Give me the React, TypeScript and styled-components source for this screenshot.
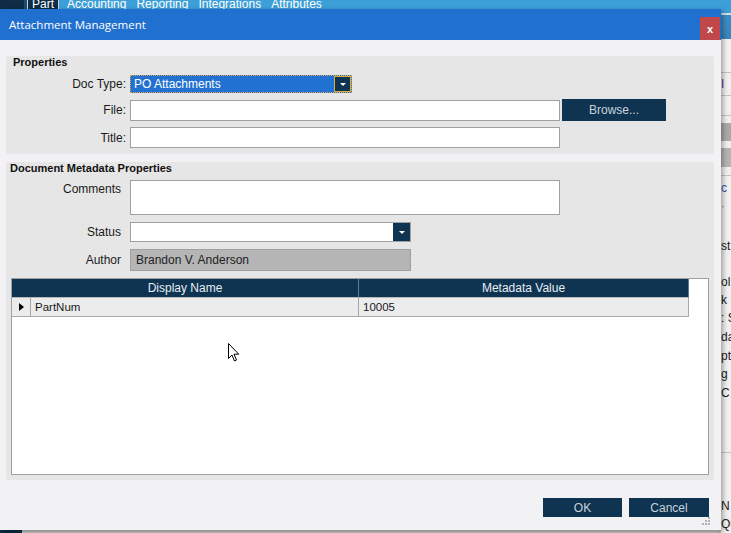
import React from 'react';
import styled, {createGlobalStyle} from 'styled-components';

const Navy = '#0e3452';
const Sans = '"Liberation Sans", Arial, sans-serif';

const GlobalStyle = createGlobalStyle`
    html, body {
        margin: 0;
        padding: 0;
    }
    body {
        font-family: ${Sans};
        background: #0e2c45;
    }
`;

const Screen = styled.div`
    position: relative;
    width: 731px;
    height: 533px;
    overflow: hidden;
    background: #ededed;
    display: flex;
    flex-direction: column;
`;

/* ---------- application behind the dialog ---------- */

const MenuBar = styled.div`
    height: 13px;
    display: flex;
    align-items: flex-start;
    background: #3c9fd8;
    font-size: 12px;
    color: #ffffff;
`;

const MenuBrand = styled.div`
    width: 24px;
    height: 100%;
    background: #0e2c45;
    border-right: 3px solid #1d4a6e;
`;

const MenuTab = styled.div<{active?: boolean}>`
    padding: 0 ${({active}) => (active ? '4px' : '5px')};
    margin-right: ${({active}) => (active ? '3px' : '0')};
    line-height: 9px;
    height: 13px;
    box-sizing: border-box;
    background: ${({active}) => (active ? '#0e2c45' : 'transparent')};
    border: ${({active}) => (active ? '1px solid #c8d4de' : 'none')};
    border-top: none;
`;

const SubBar = styled.div`
    height: 26px;
    background: linear-gradient(#3a8fc9, #3b84b8);
    border-top: 2px solid #d8dde2;
`;

const AppBody = styled.div`
    flex: 1;
    display: flex;
`;

const LeftRail = styled.div`
    width: 22px;
    background: #0e2c45;
`;

const MainArea = styled.div`
    flex: 1;
    background: #c8c8c8;
`;

const RightPeek = styled.div`
    width: 10px;
    display: flex;
    flex-direction: column;
    background: #f0f0f0;
    border-left: 3px solid #bdbdbd;
    overflow: hidden;
    font-size: 12px;
    color: #1a1a1a;
    white-space: nowrap;
`;

const PeekRow = styled.div<{h: number; bg?: string; line?: boolean; color?: string}>`
    height: ${({h}) => h}px;
    line-height: ${({h}) => h}px;
    box-sizing: border-box;
    flex-shrink: 0;
    background: ${({bg}) => bg || 'transparent'};
    border-bottom: ${({line}) => (line ? '1px solid #c4c4c4' : 'none')};
    color: ${({color}) => color || 'inherit'};
`;

/* ---------- dialog ---------- */

const Dialog = styled.div`
    position: absolute;
    top: 9px;
    left: 0;
    width: 721px;
    height: 521px;
    display: flex;
    flex-direction: column;
    box-shadow: 2px 2px 5px rgba(0, 0, 0, 0.35);
`;

const TitleBar = styled.div`
    height: 31px;
    flex-shrink: 0;
    display: flex;
    align-items: center;
    padding-left: 9px;
    background: #2070d0;
    color: #ffffff;
    font-family: "Open Sans", "Noto Sans", sans-serif;
    font-size: 11.5px;
`;

const CloseButton = styled.div`
    margin-left: auto;
    margin-right: 1px;
    align-self: flex-end;
    width: 20px;
    height: 23px;
    display: flex;
    align-items: center;
    justify-content: center;
    background: #c0474a;
    color: #ffffff;
    font-family: ${Sans};
    font-weight: bold;
    font-size: 11px;
`;

const Body = styled.div`
    flex: 1;
    display: flex;
    flex-direction: column;
    padding: 16px 7px 0 6px;
    background: #f2f2f4;
    border-left: 2px solid #10304d;
    margin-left: -2px;
`;

const Group = styled.div<{h: number; legendPad: number}>`
    height: ${({h}) => h}px;
    box-sizing: border-box;
    display: flex;
    flex-direction: column;
    background: #e6e6e6;
    border-radius: 3px;

    .legend {
        height: 13px;
        line-height: 13px;
        padding-left: ${({legendPad}) => legendPad}px;
        font-size: 11px;
        font-weight: bold;
        color: #111111;
    }
`;

const Rows = styled.div<{top: number; gap: number}>`
    display: flex;
    flex-direction: column;
    gap: ${({gap}) => gap}px;
    margin-top: ${({top}) => top}px;
`;

const Row = styled.div<{align?: string}>`
    display: flex;
    align-items: ${({align}) => align || 'center'};
`;

const Label = styled.div<{w: number; gap: number; top?: number}>`
    width: ${({w}) => w}px;
    margin-right: ${({gap}) => gap}px;
    padding-top: ${({top}) => top || 0}px;
    text-align: right;
    font-size: 12px;
    color: #1a1a1a;
    flex-shrink: 0;
`;

const TextBox = styled.div<{w: number; h: number; bg?: string}>`
    width: ${({w}) => w}px;
    height: ${({h}) => h}px;
    box-sizing: border-box;
    display: flex;
    align-items: center;
    padding-left: 5px;
    background: ${({bg}) => bg || '#ffffff'};
    border: 1px solid #a0a0a0;
    font-size: 12px;
    color: #222222;
`;

const Combo = styled.div<{w: number; h: number; focused?: boolean}>`
    width: ${({w}) => w}px;
    height: ${({h}) => h}px;
    box-sizing: border-box;
    display: flex;
    align-items: stretch;
    background: ${({focused}) => (focused ? '#2171d1' : '#ffffff')};
    border: ${({focused}) => (focused ? '1px dotted #e0a050' : '1px solid #a0a0a0')};
    font-size: 12px;
    color: #ffffff;

    .value {
        flex: 1;
        display: flex;
        align-items: center;
        padding-left: 3px;
    }
`;

const DropButton = styled.div<{focused?: boolean}>`
    width: 17px;
    box-sizing: border-box;
    display: flex;
    align-items: center;
    justify-content: center;
    background: ${Navy};
    border: ${({focused}) => (focused ? '1px solid #d8b040' : 'none')};

    &::after {
        content: '';
        border-left: 3px solid transparent;
        border-right: 3px solid transparent;
        border-top: 3px solid #ffffff;
    }
`;

const DarkButton = styled.div<{w: number; h: number; ml?: number}>`
    width: ${({w}) => w}px;
    height: ${({h}) => h}px;
    margin-left: ${({ml}) => ml || 0}px;
    display: flex;
    align-items: center;
    justify-content: center;
    background: ${Navy};
    color: #c9d2da;
    font-size: 12px;
`;

const GridBox = styled.div`
    height: 197px;
    margin: 7px 5px 0 5px;
    box-sizing: border-box;
    background: #ffffff;
    border: 1px solid #a0a0a0;
`;

const GridTable = styled.div`
    display: grid;
    grid-template-columns: 19px 328px 330px;
    width: 677px;
    font-size: 11.5px;
`;

const HeadCell = styled.div<{span?: number}>`
    grid-column: span ${({span}) => span || 1};
    height: 19px;
    box-sizing: border-box;
    display: flex;
    align-items: center;
    justify-content: center;
    background: ${Navy};
    color: #e6edf3;
    border-bottom: 1px solid #b8b8b8;
    border-right: 1px solid #5d7a92;
    font-size: 12px;

    &:last-child {
        border-right: none;
    }
`;

const Cell = styled.div<{indicator?: boolean}>`
    height: 19px;
    box-sizing: border-box;
    display: flex;
    align-items: center;
    justify-content: ${({indicator}) => (indicator ? 'center' : 'flex-start')};
    padding-left: ${({indicator}) => (indicator ? '0' : '4px')};
    background: #ececec;
    color: #1a1a1a;
    border-bottom: 1px solid #a8a8a8;
    border-right: 1px solid #a8a8a8;
`;

const RowArrow = styled.div`
    width: 0;
    height: 0;
    border-top: 4px solid transparent;
    border-bottom: 4px solid transparent;
    border-left: 5px solid #000000;
    margin-left: 1px;
`;

const Footer = styled.div`
    flex: 1;
    display: flex;
    justify-content: flex-end;
    align-items: flex-start;
    gap: 7px;
    padding: 18px 5px 0 0;
`;

const Cursor = styled.svg`
    position: absolute;
    left: 228px;
    top: 343px;
`;

const Grip = styled.svg`
    position: absolute;
    right: 11px;
    bottom: 5px;
`;

const peek: {h: number; bg?: string; line?: boolean; color?: string; text?: string}[] = [
    {h: 34, line: true},
    {h: 23, line: true, color: '#6a2a8a', text: 'I'},
    {h: 20, line: true},
    {h: 7},
    {h: 18, bg: '#a9a9a9'},
    {h: 7},
    {h: 19, bg: '#b4b4b4'},
    {h: 9, line: true},
    {h: 24, color: '#2a5aa8', text: 'c'},
    {h: 12, color: '#d08020', text: '·'},
    {h: 25},
    {h: 18, text: 'st'},
    {h: 18},
    {h: 18, text: 'ol'},
    {h: 18, text: 'k I'},
    {h: 19, text: ': S'},
    {h: 19, text: 'da'},
    {h: 18, text: 'pt'},
    {h: 19, text: 'g D'},
    {h: 19, text: 'C'},
    {h: 50, line: true},
    {h: 44},
    {h: 18, text: 'N'},
    {h: 18, text: 'Qu'}
];

const App: React.FC = () => (
    <>
        <GlobalStyle />
        <Screen>
            <MenuBar>
                <MenuBrand />
                <MenuTab active>Part</MenuTab>
                <MenuTab>Accounting</MenuTab>
                <MenuTab>Reporting</MenuTab>
                <MenuTab>Integrations</MenuTab>
                <MenuTab>Attributes</MenuTab>
            </MenuBar>
            <SubBar />
            <AppBody>
                <LeftRail />
                <MainArea />
                <RightPeek>
                    {peek.map((p, i) => (
                        <PeekRow key={i} h={p.h} bg={p.bg} line={p.line} color={p.color}>
                            {p.text}
                        </PeekRow>
                    ))}
                </RightPeek>
            </AppBody>

            <Dialog>
                <TitleBar>
                    Attachment Management
                    <CloseButton>x</CloseButton>
                </TitleBar>
                <Body>
                    <Group h={98} legendPad={7} style={{marginBottom: 8}}>
                        <div className='legend'>Properties</div>
                        <Rows top={6} gap={6}>
                            <Row>
                                <Label w={120} gap={4}>Doc Type:</Label>
                                <Combo w={222} h={18} focused>
                                    <div className='value'>PO Attachments</div>
                                    <DropButton focused />
                                </Combo>
                            </Row>
                            <Row>
                                <Label w={120} gap={4}>File:</Label>
                                <TextBox w={430} h={21} />
                                <DarkButton w={104} h={22} ml={2}>Browse...</DarkButton>
                            </Row>
                            <Row>
                                <Label w={120} gap={4}>Title:</Label>
                                <TextBox w={430} h={21} />
                            </Row>
                        </Rows>
                    </Group>

                    <Group h={318} legendPad={4}>
                        <div className='legend'>Document Metadata Properties</div>
                        <Rows top={5} gap={7}>
                            <Row align='flex-start'>
                                <Label w={115} gap={9} top={2}>Comments</Label>
                                <TextBox w={430} h={35} />
                            </Row>
                            <Row>
                                <Label w={115} gap={9}>Status</Label>
                                <Combo w={281} h={20}>
                                    <div className='value' />
                                    <DropButton />
                                </Combo>
                            </Row>
                            <Row>
                                <Label w={115} gap={9}>Author</Label>
                                <TextBox w={281} h={22} bg='#b5b5b5'>Brandon V. Anderson</TextBox>
                            </Row>
                        </Rows>
                        <GridBox>
                            <GridTable>
                                <HeadCell span={2}>Display Name</HeadCell>
                                <HeadCell>Metadata Value</HeadCell>
                                <Cell indicator>
                                    <RowArrow />
                                </Cell>
                                <Cell>PartNum</Cell>
                                <Cell>10005</Cell>
                            </GridTable>
                        </GridBox>
                    </Group>

                    <Footer>
                        <DarkButton w={79} h={19}>OK</DarkButton>
                        <DarkButton w={80} h={19}>Cancel</DarkButton>
                    </Footer>
                </Body>
                <Grip width='8' height='8' viewBox='0 0 8 8'>
                    {[
                        [6, 0],
                        [3, 3],
                        [6, 3],
                        [0, 6],
                        [3, 6],
                        [6, 6]
                    ].map(([x, y], i) => (
                        <rect key={i} x={x} y={y} width='2' height='2' fill='#b0b0b0' />
                    ))}
                </Grip>
            </Dialog>

            <Cursor width='12' height='19' viewBox='0 0 12 19'>
                <path
                    d='M0.5 0.5 L0.5 15.5 L4 12 L6.5 18 L8.5 17 L6 11.2 L10.8 11.2 Z'
                    fill='#ffffff'
                    stroke='#000000'
                    strokeWidth='1'
                    strokeLinejoin='miter'
                />
            </Cursor>
        </Screen>
    </>
);

export default App;
